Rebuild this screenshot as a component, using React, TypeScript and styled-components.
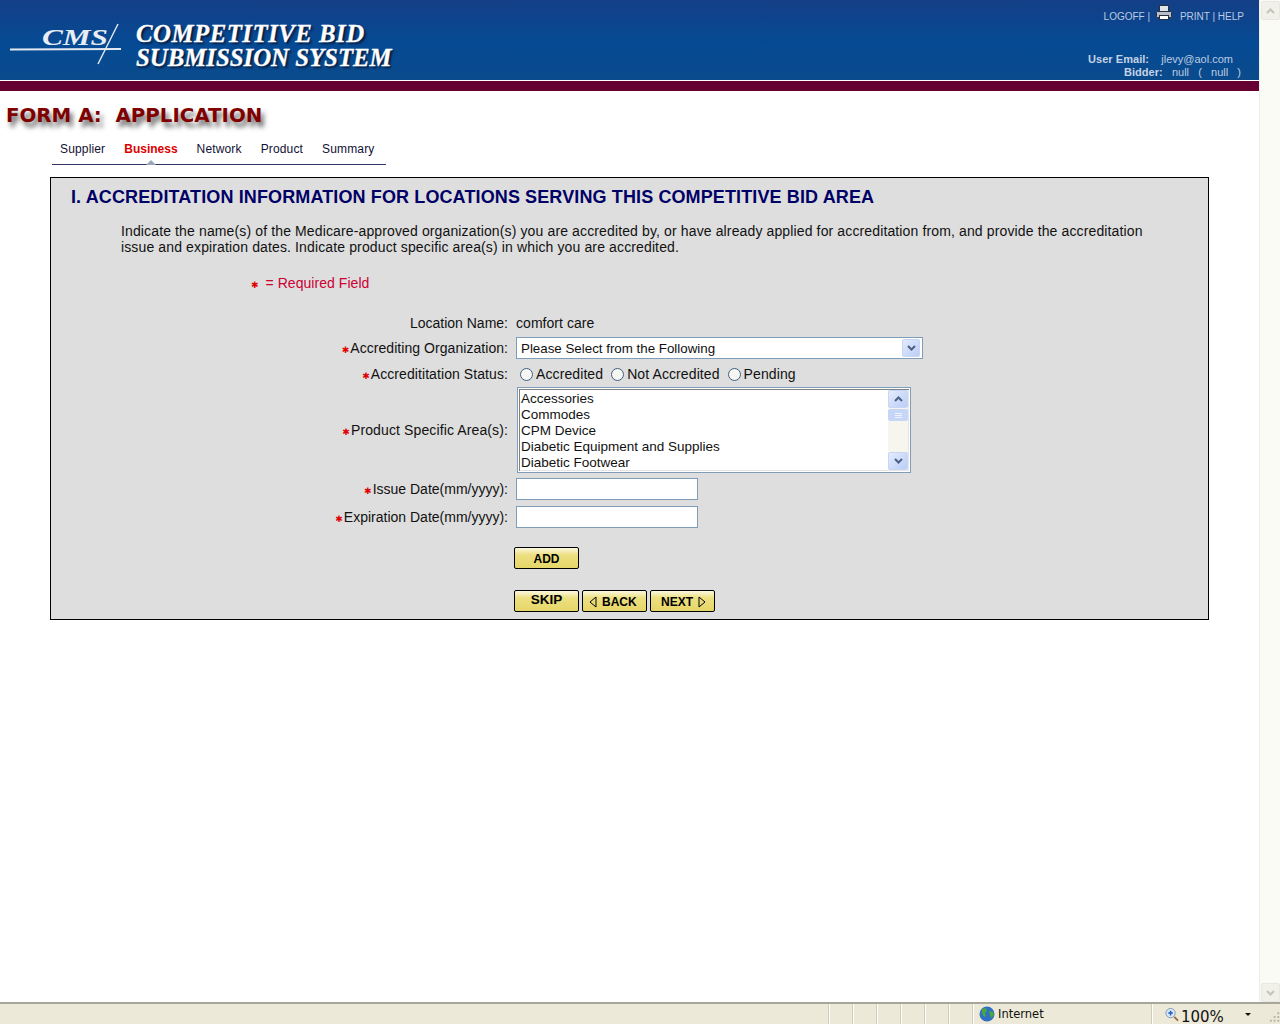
import React from 'react'
import styled, { createGlobalStyle } from 'styled-components'

const GlobalStyle = createGlobalStyle`
  html, body {
    margin: 0;
    padding: 0;
    height: 100%;
    overflow: hidden;
    background: #fff;
    font-family: "Liberation Sans", Arial, sans-serif;
  }
`

const Window = styled.div`
  display: flex;
  flex-direction: column;
  width: 1280px;
  height: 1024px;
`

const Viewport = styled.div`
  display: flex;
  height: 1002px;
`

const Page = styled.div`
  width: 1259px;
`

const Banner = styled.header`
  display: flex;
  justify-content: space-between;
  height: 80px;
  background: linear-gradient(180deg, #143f86 0%, #054a94 55%, #0b4b8c 100%);
`

const Brand = styled.div`
  display: flex;
  align-items: flex-start;
  padding: 22px 0 0 10px;
`

const SystemName = styled.div`
  margin-left: 14px;
  font-family: "Liberation Serif", "Times New Roman", serif;
  font-weight: bold;
  font-style: italic;
  font-size: 24.8px;
  line-height: 24px;
  color: #fff;
  -webkit-text-stroke: 0.3px #fff;
  text-shadow: 2px 2px 2px #0a1a3a;
  white-space: nowrap;
`

const SystemLine = styled.span`
  letter-spacing: 0.5px;
`

const UserArea = styled.div`
  display: flex;
  flex-direction: column;
  align-items: flex-end;
  width: 220px;
  padding-right: 15px;
  color: #bccbe2;
`

const TopLinks = styled.div`
  display: flex;
  align-items: flex-start;
  height: 53px;
  padding-top: 4px;
  box-sizing: border-box;
  font-size: 10px;
  white-space: pre;
`

const LinkText = styled.span`
  padding-top: 6px;
  line-height: 13px;
`

const PrintIcon = styled.svg`
  width: 16px;
  height: 16px;
  margin: 1px 8px 0 3px;
`

const UserRow = styled.div<{ $right: number }>`
  height: 13px;
  font-size: 11px;
  line-height: 13px;
  margin-right: ${(p) => p.$right}px;
  white-space: pre;
`

const UserLabel = styled.b`
  font-weight: bold;
  letter-spacing: 0.05px;
  color: #c6d2e6;
`

const MaroonBar = styled.div`
  height: 10px;
  border-top: 1px solid #fff;
  background: #660033;
`

const FormTitle = styled.h1`
  margin: 13px 0 0 6px;
  height: 26px;
  font-family: "DejaVu Sans", Verdana, sans-serif;
  font-weight: bold;
  font-size: 19.8px;
  line-height: 24px;
  color: #800000;
  text-shadow: 3px 5px 5px #666;
  white-space: pre;
`

const Tabs = styled.nav`
  display: flex;
  gap: 19px;
  width: 334px;
  height: 25px;
  margin: 10px 0 12px 52px;
  padding-left: 8px;
  box-sizing: border-box;
  border-bottom: 1px solid #333366;
`

const Tab = styled.a<{ $active?: boolean }>`
  position: relative;
  font-size: 12px;
  line-height: 18px;
  letter-spacing: ${(p) => (p.$active ? '0' : '0.15px')};
  font-weight: ${(p) => (p.$active ? 'bold' : 'normal')};
  color: ${(p) => (p.$active ? '#dd0000' : '#111133')};

  ${(p) =>
    p.$active &&
    `&::after {
      content: '';
      position: absolute;
      left: 50%;
      bottom: -1px;
      margin-left: -5px;
      border: 5px solid transparent;
      border-top: 0;
      border-bottom-color: #98a8bc;
    }`}
`

const Panel = styled.section`
  width: 1159px;
  height: 443px;
  margin-left: 50px;
  box-sizing: border-box;
  padding-top: 9px;
  border: 1px solid #000;
  background: #dedede;
`

const Heading = styled.h2`
  margin: 0 0 0 20px;
  font-size: 18px;
  line-height: 20px;
  font-weight: bold;
  letter-spacing: 0.12px;
  color: #000066;
`

const Intro = styled.p`
  width: 1040px;
  margin: 16px 0 0 70px;
  font-size: 14px;
  line-height: 16px;
  letter-spacing: 0.13px;
  color: #111;
`

const RequiredNote = styled.div`
  margin: 18px 0 17px 200px;
  font-size: 14px;
  line-height: 20px;
  letter-spacing: 0.05px;
  color: #cc0033;
`

const Star = styled.span<{ $after?: number }>`
  margin-right: ${(p) => p.$after ?? 1}px;
  font-family: "DejaVu Sans", sans-serif;
  font-size: 9px;
  line-height: 0;
  font-weight: bold;
  color: #e00000;
`

const Row = styled.div<{ $height: number }>`
  display: grid;
  grid-template-columns: 457px 1fr;
  column-gap: 8px;
  align-items: center;
  height: ${(p) => p.$height}px;
`

const Label = styled.label<{ $track?: number }>`
  text-align: right;
  font-size: 14px;
  letter-spacing: ${(p) => p.$track ?? 0}px;
  color: #111;
  white-space: nowrap;
`

const Value = styled.div`
  font-size: 14px;
  letter-spacing: 0.05px;
  color: #111;
`

const SelectBox = styled.div`
  display: flex;
  align-items: center;
  justify-content: space-between;
  width: 407px;
  height: 22px;
  box-sizing: border-box;
  padding: 0 2px 0 4px;
  border: 1px solid #7f9db9;
  background: #fff;
  font-size: 13.33px;
  color: #111;
`

const SelectText = styled.span`
  padding-top: 1px;
`

const ScrollButton = styled.span<{ $disabled?: boolean; $w?: number; $h?: number }>`
  display: flex;
  align-items: center;
  justify-content: center;
  width: ${(p) => p.$w ?? 18}px;
  height: ${(p) => p.$h ?? 18}px;
  box-sizing: border-box;
  border: 1px solid ${(p) => (p.$disabled ? '#e8e8e0' : '#c8d6f4')};
  border-radius: 2px;
  background: ${(p) =>
    p.$disabled ? '#f1f0e9' : 'linear-gradient(135deg, #e4ecfd 0%, #b9cdf7 100%)'};
  color: ${(p) => (p.$disabled ? '#c4c4b8' : '#4d6185')};
`

const Chevron = styled.svg<{ $down?: boolean }>`
  width: 9px;
  height: 6px;
  transform: ${(p) => (p.$down ? 'none' : 'rotate(180deg)')};
`

const RadioGroup = styled.div`
  display: flex;
  align-items: center;
  padding: 1px 0 0 4px;
  font-size: 14px;
  letter-spacing: 0.1px;
  color: #111;
`

const RadioLabel = styled.span`
  margin: 0 8px 0 3px;
`

const Radio = styled.span`
  width: 13px;
  height: 13px;
  box-sizing: border-box;
  border: 1px solid #3f5f80;
  border-radius: 50%;
  background: #f6f6f2;
`

const ListBox = styled.div`
  display: flex;
  justify-content: space-between;
  width: 394px;
  height: 86px;
  margin-left: 1px;
  box-sizing: border-box;
  padding: 1px 2px 1px 1px;
  border: 1px solid #7f9db9;
  background: #fff;
  box-shadow: inset 0 0 0 1px #fff, inset 2px 2px 0 #808080, inset -2px -2px 0 #e4e4e4;
`

const ListItems = styled.ul`
  margin: 0;
  padding: 2px 0 0 2px;
  list-style: none;
  font-size: 13.5px;
  line-height: 16px;
  color: #111;
`

const ListScroll = styled.div`
  display: flex;
  flex-direction: column;
  width: 20px;
  margin: 1px 0;
  background: #f6f6ef;
`

const ThumbLines = styled.div`
  display: flex;
  flex-direction: column;
  align-items: center;
  justify-content: center;
  gap: 1px;
  width: 20px;
  height: 12px;
  margin-top: 1px;
  box-sizing: border-box;
  border: 1px solid #c8d6f4;
  border-radius: 2px;
  background: #c6d6f8;
`

const ThumbLine = styled.i`
  display: block;
  width: 7px;
  height: 1px;
  background: #eef3fe;
`

const ScrollGap = styled.div`
  flex: 1;
`

const TextInput = styled.div`
  width: 182px;
  height: 22px;
  box-sizing: border-box;
  border: 1px solid #7f9db9;
  background: #fff;
`

const ButtonRow = styled.div<{ $top: number }>`
  display: flex;
  gap: 3px;
  margin: ${(p) => p.$top}px 0 0 463px;
`

const GoldButton = styled.div<{ $raised?: boolean; $start?: number }>`
  display: flex;
  align-items: center;
  justify-content: ${(p) => (p.$start ? 'flex-start' : 'center')};
  gap: 5px;
  width: 65px;
  height: 22px;
  box-sizing: border-box;
  padding: ${(p) => (p.$raised ? '0 0 3px' : '2px 0 0')};
  padding-left: ${(p) => p.$start ?? 0}px;
  border: 1px solid #000;
  border-radius: 2px;
  background: linear-gradient(180deg, #fbf8e0 0%, #ecdf80 35%, #e6d668 100%);
  font-size: ${(p) => (p.$raised ? '13.5px' : '12px')};
  font-weight: bold;
  color: #000;
`

const Arrow = styled.svg`
  width: 8px;
  height: 12px;
`

const Scrollbar = styled.aside`
  display: flex;
  flex-direction: column;
  justify-content: space-between;
  width: 21px;
  box-sizing: border-box;
  padding: 1px 1px 0 1px;
  border-left: 1px solid #eeeee8;
  background: #fbfbf6;
`

const StatusBar = styled.footer`
  display: flex;
  align-items: center;
  height: 22px;
  box-sizing: border-box;
  border-top: 2px solid #a8a698;
  padding-left: 829px;
  background: #ece9d8;
  font-family: "DejaVu Sans", sans-serif;
  font-size: 11.5px;
  color: #111;
`

const StatusCell = styled.div<{ $width: number }>`
  display: flex;
  align-items: center;
  width: ${(p) => p.$width}px;
  height: 100%;
  box-sizing: border-box;
  border-left: 1px solid #fff;
  box-shadow: -1px 0 0 #cfccba;
`

const GlobeIcon = styled.svg`
  width: 16px;
  height: 16px;
  margin: 0 3px 0 5px;
`

const ZoomIcon = styled.svg`
  width: 15px;
  height: 15px;
  margin-left: 12px;
`

const ZoomValue = styled.span`
  margin: 5px 0 0 2px;
  font-size: 15px;
  line-height: 16px;
`

const ZoomCaret = styled.span`
  margin-left: 21px;
  border: 3px solid transparent;
  border-top-color: #111;
  border-bottom: 0;
`

const Grip = styled.svg`
  width: 12px;
  height: 12px;
  margin: 6px 0 0 18px;
`

const ChevronGlyph: React.FC<{ down?: boolean }> = ({ down }) => (
  <Chevron $down={down} viewBox="0 0 9 6">
    <path d="M1 1l3.5 3.5L8 1" fill="none" stroke="currentColor" strokeWidth="2" />
  </Chevron>
)

const products = [
  'Accessories',
  'Commodes',
  'CPM Device',
  'Diabetic Equipment and Supplies',
  'Diabetic Footwear',
]

const App: React.FC = () => {
  return (
    <Window>
      <GlobalStyle />
      <Viewport>
        <Page>
          <Banner>
            <Brand>
              <svg width="112" height="44" viewBox="0 0 112 44">
                <text
                  x="32"
                  y="23"
                  fontFamily="Liberation Serif, serif"
                  fontWeight="bold"
                  fontStyle="italic"
                  fontSize="24"
                  fill="#e8ecf4"
                  textLength="66"
                  lengthAdjust="spacingAndGlyphs"
                >
                  CMS
                </text>
                <path d="M0 27.5L111 27" stroke="#e4e8f0" strokeWidth="2" />
                <path d="M108 2L88 42" stroke="#e8ecf4" strokeWidth="1.4" />
              </svg>
              <SystemName>
                <SystemLine>COMPETITIVE BID</SystemLine>
                <br />
                SUBMISSION SYSTEM
              </SystemName>
            </Brand>
            <UserArea>
              <TopLinks>
                <LinkText>LOGOFF | </LinkText>
                <PrintIcon viewBox="0 0 16 16">
                  <rect x="3.5" y="0.5" width="9" height="6" fill="#dfe3ea" stroke="#26303f" />
                  <rect x="0.5" y="6.5" width="15" height="6" rx="1" fill="#b8bec9" stroke="#26303f" />
                  <rect x="3.5" y="10.5" width="9" height="4" fill="#fff" stroke="#26303f" />
                </PrintIcon>
                <LinkText>PRINT | HELP</LinkText>
              </TopLinks>
              <UserRow $right={11}>
                <UserLabel>User Email:</UserLabel>
                {'    jlevy@aol.com'}
              </UserRow>
              <UserRow $right={3}>
                <UserLabel>Bidder:</UserLabel>
                {'   null   (   null   )'}
              </UserRow>
            </UserArea>
          </Banner>
          <MaroonBar />
          <FormTitle>FORM A:  APPLICATION</FormTitle>
          <Tabs>
            <Tab>Supplier</Tab>
            <Tab $active>Business</Tab>
            <Tab>Network</Tab>
            <Tab>Product</Tab>
            <Tab>Summary</Tab>
          </Tabs>
          <Panel>
            <Heading>I. ACCREDITATION INFORMATION FOR LOCATIONS SERVING THIS COMPETITIVE BID AREA</Heading>
            <Intro>
              Indicate the name(s) of the Medicare-approved organization(s) you are accredited by, or have
              already applied for accreditation from, and provide the accreditation issue and expiration
              dates. Indicate product specific area(s) in which you are accredited.
            </Intro>
            <RequiredNote>
              <Star $after={3}>✱</Star> = Required Field
            </RequiredNote>
            <Row $height={25}>
              <Label>Location Name:</Label>
              <Value>comfort care</Value>
            </Row>
            <Row $height={25}>
              <Label $track={0.05}>
                <Star>✱</Star>
                Accrediting Organization:
              </Label>
              <SelectBox>
                <SelectText>Please Select from the Following</SelectText>
                <ScrollButton $h={18}>
                  <ChevronGlyph down />
                </ScrollButton>
              </SelectBox>
            </Row>
            <Row $height={27}>
              <Label $track={0.08}>
                <Star>✱</Star>
                Accredititation Status:
              </Label>
              <RadioGroup>
                <Radio />
                <RadioLabel>Accredited</RadioLabel>
                <Radio />
                <RadioLabel>Not Accredited</RadioLabel>
                <Radio />
                <RadioLabel>Pending</RadioLabel>
              </RadioGroup>
            </Row>
            <Row $height={86}>
              <Label $track={0.12}>
                <Star>✱</Star>
                Product Specific Area(s):
              </Label>
              <ListBox>
                <ListItems>
                  {products.map((name) => (
                    <li key={name}>{name}</li>
                  ))}
                </ListItems>
                <ListScroll>
                  <ScrollButton $w={20}>
                    <ChevronGlyph />
                  </ScrollButton>
                  <ThumbLines>
                    <ThumbLine />
                    <ThumbLine />
                    <ThumbLine />
                  </ThumbLines>
                  <ScrollGap />
                  <ScrollButton $w={20}>
                    <ChevronGlyph down />
                  </ScrollButton>
                </ListScroll>
              </ListBox>
            </Row>
            <Row $height={32}>
              <Label>
                <Star>✱</Star>
                Issue Date(mm/yyyy):
              </Label>
              <TextInput />
            </Row>
            <Row $height={24}>
              <Label>
                <Star>✱</Star>
                Expiration Date(mm/yyyy):
              </Label>
              <TextInput />
            </Row>
            <ButtonRow $top={18}>
              <GoldButton>ADD</GoldButton>
            </ButtonRow>
            <ButtonRow $top={21}>
              <GoldButton $raised>SKIP</GoldButton>
              <GoldButton $start={6}>
                <Arrow viewBox="0 0 8 12">
                  <path d="M7 1L1 6l6 5z" fill="none" stroke="#000" />
                </Arrow>
                BACK
              </GoldButton>
              <GoldButton $start={10}>
                NEXT
                <Arrow viewBox="0 0 8 12">
                  <path d="M1 1l6 5-6 5z" fill="none" stroke="#000" />
                </Arrow>
              </GoldButton>
            </ButtonRow>
          </Panel>
        </Page>
        <Scrollbar>
          <ScrollButton $disabled $w={19} $h={19}>
            <ChevronGlyph />
          </ScrollButton>
          <ScrollButton $disabled $w={19} $h={19}>
            <ChevronGlyph down />
          </ScrollButton>
        </Scrollbar>
      </Viewport>
      <StatusBar>
        <StatusCell $width={24} />
        <StatusCell $width={24} />
        <StatusCell $width={24} />
        <StatusCell $width={24} />
        <StatusCell $width={24} />
        <StatusCell $width={24} />
        <StatusCell $width={179}>
          <GlobeIcon viewBox="0 0 16 16">
            <circle cx="8" cy="8" r="7.5" fill="#2f6fc4" />
            <path d="M3 3l4-1 1 3-2 2 1 3-2 1-2-4zM10 5l4 1 1 3-3 3-1-3z" fill="#4ca83a" />
          </GlobeIcon>
          Internet
        </StatusCell>
        <StatusCell $width={128}>
          <ZoomIcon viewBox="0 0 15 15">
            <circle cx="6" cy="6" r="5" fill="#dbe8fa" stroke="#7f93ad" />
            <path d="M6 3.5v5M3.5 6h5" stroke="#1f5fc0" strokeWidth="1.6" />
            <path d="M10 10l4 4" stroke="#9a6a3a" strokeWidth="2" />
          </ZoomIcon>
          <ZoomValue>100%</ZoomValue>
          <ZoomCaret />
          <Grip viewBox="0 0 12 12" fill="#b4b1a0">
            <rect x="9" y="1" width="2" height="2" />
            <rect x="5" y="5" width="2" height="2" />
            <rect x="9" y="5" width="2" height="2" />
            <rect x="1" y="9" width="2" height="2" />
            <rect x="5" y="9" width="2" height="2" />
            <rect x="9" y="9" width="2" height="2" />
          </Grip>
        </StatusCell>
      </StatusBar>
    </Window>
  )
}

export default App
